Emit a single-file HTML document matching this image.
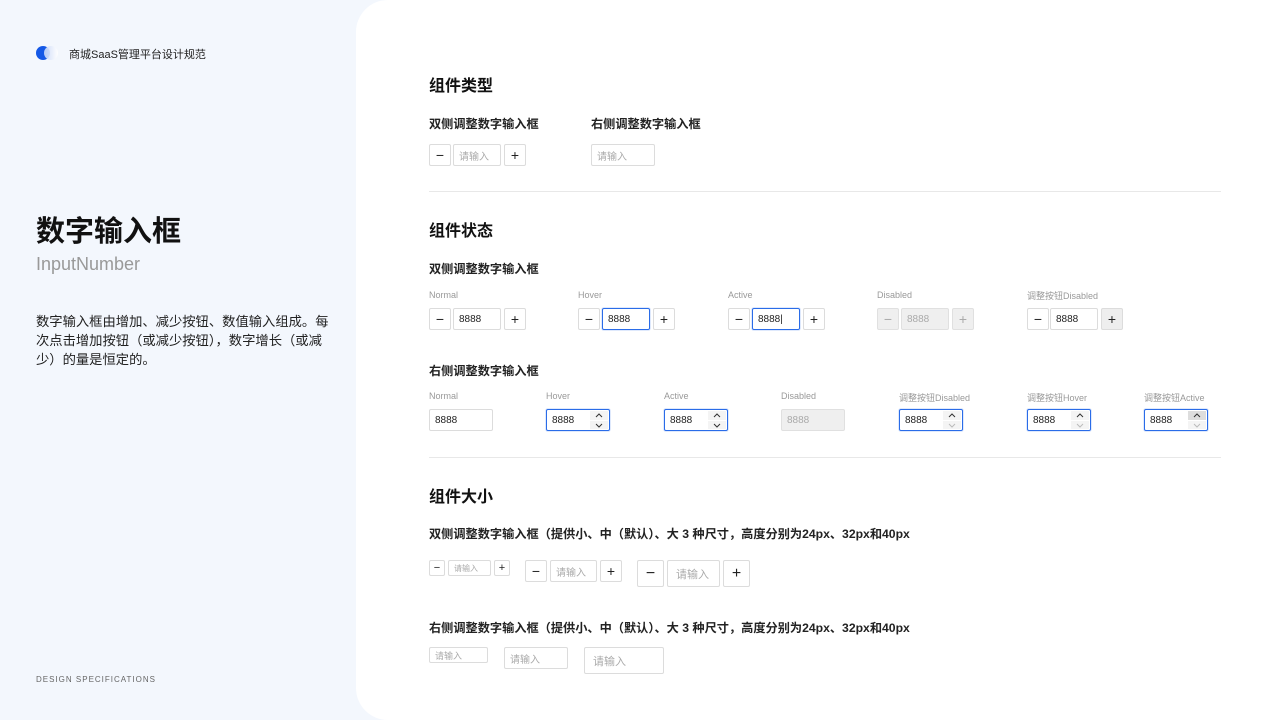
<!DOCTYPE html><html><head><meta charset="utf-8"><style>
*{margin:0;padding:0;box-sizing:border-box}
body{width:1280px;height:720px;overflow:hidden;background:#f3f7fd;font-family:"Liberation Sans","Noto Sans CJK SC",sans-serif;position:relative;color:#111}
.a{position:absolute}
.main{position:absolute;left:356px;top:0;width:924px;height:720px;background:#fff;border-top-left-radius:32px;border-bottom-left-radius:32px}
.h2{font-size:16px;font-weight:bold;color:#111}
.h3{font-size:12.2px;font-weight:bold;color:#222}
.lb{font-size:9px;color:#999}
.b{position:absolute;border:1px solid #dcdcdc;border-radius:2px;background:#fff;display:flex;align-items:center;justify-content:center;font-size:14px;color:#222;line-height:1}
.i{position:absolute;border:1px solid #dcdcdc;border-radius:2px;background:#fff;font-size:10px;color:#222;padding-left:5px;display:flex;align-items:center}
.ph{color:#aaa}
.bl{border-color:#2a6ce8;box-shadow:0 0 0 1px rgba(42,108,232,.15)}
.dis{background:#efefef;color:#aaa;border-color:#e0e0e0}
.hr{position:absolute;left:429px;width:792px;height:1px;background:#e8e8e8}
.ar{position:absolute;right:1px;top:1px;width:18px;height:18px}
.ar div{height:9px;background:#f4f4f4;display:flex;align-items:center;justify-content:center}
.ar div+div{margin-top:0;border-top:1px solid #fff}
</style></head><body>
<div class="a" style="left:36px;top:46px;width:14px;height:14px;border-radius:50%;background:#1458e6"></div>
<div class="a" style="left:44px;top:46px;width:14px;height:14px;border-radius:50%;background:linear-gradient(90deg,#c8d8f8,#fff);opacity:.9"></div>
<div class="a" style="left:69px;top:46px;font-size:11px;color:#222">商城SaaS管理平台设计规范</div>
<div class="a" style="left:36px;top:208px;font-size:29px;font-weight:bold;color:#111">数字输入框</div>
<div class="a" style="left:36px;top:254px;font-size:18px;color:#999">InputNumber</div>
<div class="a" style="left:36px;top:312px;width:300px;font-size:13.3px;line-height:19px;color:#222">数字输入框由增加、减少按钮、数值输入组成。每次点击增加按钮（或减少按钮），数字增长（或减少）的量是恒定的。</div>
<div class="a" style="left:36px;top:675px;font-size:8px;letter-spacing:1px;color:#666">DESIGN SPECIFICATIONS</div>
<div class="main"></div>

<div class="a h2" style="left:429px;top:72px">组件类型</div>
<div class="a h3" style="left:429px;top:114px">双侧调整数字输入框</div>
<div class="a h3" style="left:591px;top:114px">右侧调整数字输入框</div>
<div class="b" style="left:429px;top:144px;width:22px;height:22px">−</div>
<div class="i ph" style="left:453px;top:144px;width:48px;height:22px">请输入</div>
<div class="b" style="left:504px;top:144px;width:22px;height:22px">+</div>
<div class="i ph" style="left:591px;top:144px;width:64px;height:22px">请输入</div>
<div class="hr" style="top:191px"></div>

<div class="a h2" style="left:429px;top:217px">组件状态</div>
<div class="a h3" style="left:429px;top:259px">双侧调整数字输入框</div>
<div class="a lb" style="left:429px;top:290px">Normal</div>
<div class="a lb" style="left:578px;top:290px">Hover</div>
<div class="a lb" style="left:728px;top:290px">Active</div>
<div class="a lb" style="left:877px;top:290px">Disabled</div>
<div class="a lb" style="left:1027px;top:289px">调整按钮Disabled</div>

<div class="b" style="left:429px;top:308px;width:22px;height:22px">−</div><div class="i" style="left:453px;top:308px;width:48px;height:22px">8888</div><div class="b" style="left:504px;top:308px;width:22px;height:22px">+</div>
<div class="b" style="left:578px;top:308px;width:22px;height:22px">−</div><div class="i bl" style="left:602px;top:308px;width:48px;height:22px">8888</div><div class="b" style="left:653px;top:308px;width:22px;height:22px">+</div>
<div class="b" style="left:728px;top:308px;width:22px;height:22px">−</div><div class="i bl" style="left:752px;top:308px;width:48px;height:22px">8888|</div><div class="b" style="left:803px;top:308px;width:22px;height:22px">+</div>
<div class="b dis" style="left:877px;top:308px;width:22px;height:22px">−</div><div class="i dis" style="left:901px;top:308px;width:48px;height:22px">8888</div><div class="b dis" style="left:952px;top:308px;width:22px;height:22px">+</div>
<div class="b" style="left:1027px;top:308px;width:22px;height:22px">−</div><div class="i" style="left:1050px;top:308px;width:48px;height:22px">8888</div><div class="b" style="left:1101px;top:308px;width:22px;height:22px;background:#eee">+</div>

<div class="a h3" style="left:429px;top:361px">右侧调整数字输入框</div>
<div class="a lb" style="left:429px;top:391px">Normal</div>
<div class="a lb" style="left:546px;top:391px">Hover</div>
<div class="a lb" style="left:664px;top:391px">Active</div>
<div class="a lb" style="left:781px;top:391px">Disabled</div>
<div class="a lb" style="left:899px;top:391px">调整按钮Disabled</div>
<div class="a lb" style="left:1027px;top:391px">调整按钮Hover</div>
<div class="a lb" style="left:1144px;top:391px">调整按钮Active</div>
<div class="i" style="left:429px;top:409px;width:64px;height:22px">8888</div>
<div class="i bl" style="left:546px;top:409px;width:64px;height:22px">8888<div class="ar"><div><svg width="8" height="5"><path d="M1 4L4 1L7 4" stroke="#333" fill="none"/></svg></div><div><svg width="8" height="5"><path d="M1 1L4 4L7 1" stroke="#333" fill="none"/></svg></div></div></div>
<div class="i bl" style="left:664px;top:409px;width:64px;height:22px">8888<div class="ar"><div><svg width="8" height="5"><path d="M1 4L4 1L7 4" stroke="#333" fill="none"/></svg></div><div><svg width="8" height="5"><path d="M1 1L4 4L7 1" stroke="#333" fill="none"/></svg></div></div></div>
<div class="i dis" style="left:781px;top:409px;width:64px;height:22px">8888</div>
<div class="i bl" style="left:899px;top:409px;width:64px;height:22px">8888<div class="ar"><div><svg width="8" height="5"><path d="M1 4L4 1L7 4" stroke="#333" fill="none"/></svg></div><div><svg width="8" height="5"><path d="M1 1L4 4L7 1" stroke="#bbb" fill="none"/></svg></div></div></div>
<div class="i bl" style="left:1027px;top:409px;width:64px;height:22px">8888<div class="ar"><div><svg width="8" height="5"><path d="M1 4L4 1L7 4" stroke="#333" fill="none"/></svg></div><div><svg width="8" height="5"><path d="M1 1L4 4L7 1" stroke="#bbb" fill="none"/></svg></div></div></div>
<div class="i bl" style="left:1144px;top:409px;width:64px;height:22px">8888<div class="ar"><div style="background:#ddd"><svg width="8" height="5"><path d="M1 4L4 1L7 4" stroke="#333" fill="none"/></svg></div><div><svg width="8" height="5"><path d="M1 1L4 4L7 1" stroke="#bbb" fill="none"/></svg></div></div></div>
<div class="hr" style="top:457px"></div>

<div class="a h2" style="left:429px;top:483px">组件大小</div>
<div class="a h3" style="left:429px;top:524px">双侧调整数字输入框（提供小、中（默认）、大 3 种尺寸，高度分别为24px、32px和40px</div>
<div class="b" style="left:429px;top:560px;width:16px;height:16px;font-size:11px">−</div><div class="i ph" style="left:448px;top:560px;width:43px;height:16px;font-size:8px">请输入</div><div class="b" style="left:494px;top:560px;width:16px;height:16px;font-size:11px">+</div>
<div class="b" style="left:525px;top:560px;width:22px;height:22px">−</div><div class="i ph" style="left:550px;top:560px;width:47px;height:22px">请输入</div><div class="b" style="left:600px;top:560px;width:22px;height:22px">+</div>
<div class="b" style="left:637px;top:560px;width:27px;height:27px;font-size:16px">−</div><div class="i ph" style="left:667px;top:560px;width:53px;height:27px;font-size:11px;padding-left:8px">请输入</div><div class="b" style="left:723px;top:560px;width:27px;height:27px;font-size:16px">+</div>

<div class="a h3" style="left:429px;top:618px">右侧调整数字输入框（提供小、中（默认）、大 3 种尺寸，高度分别为24px、32px和40px</div>
<div class="i ph" style="left:429px;top:647px;width:59px;height:16px;font-size:9px">请输入</div>
<div class="i ph" style="left:504px;top:647px;width:64px;height:22px">请输入</div>
<div class="i ph" style="left:584px;top:647px;width:80px;height:27px;font-size:11px;padding-left:8px">请输入</div>
</body></html>
